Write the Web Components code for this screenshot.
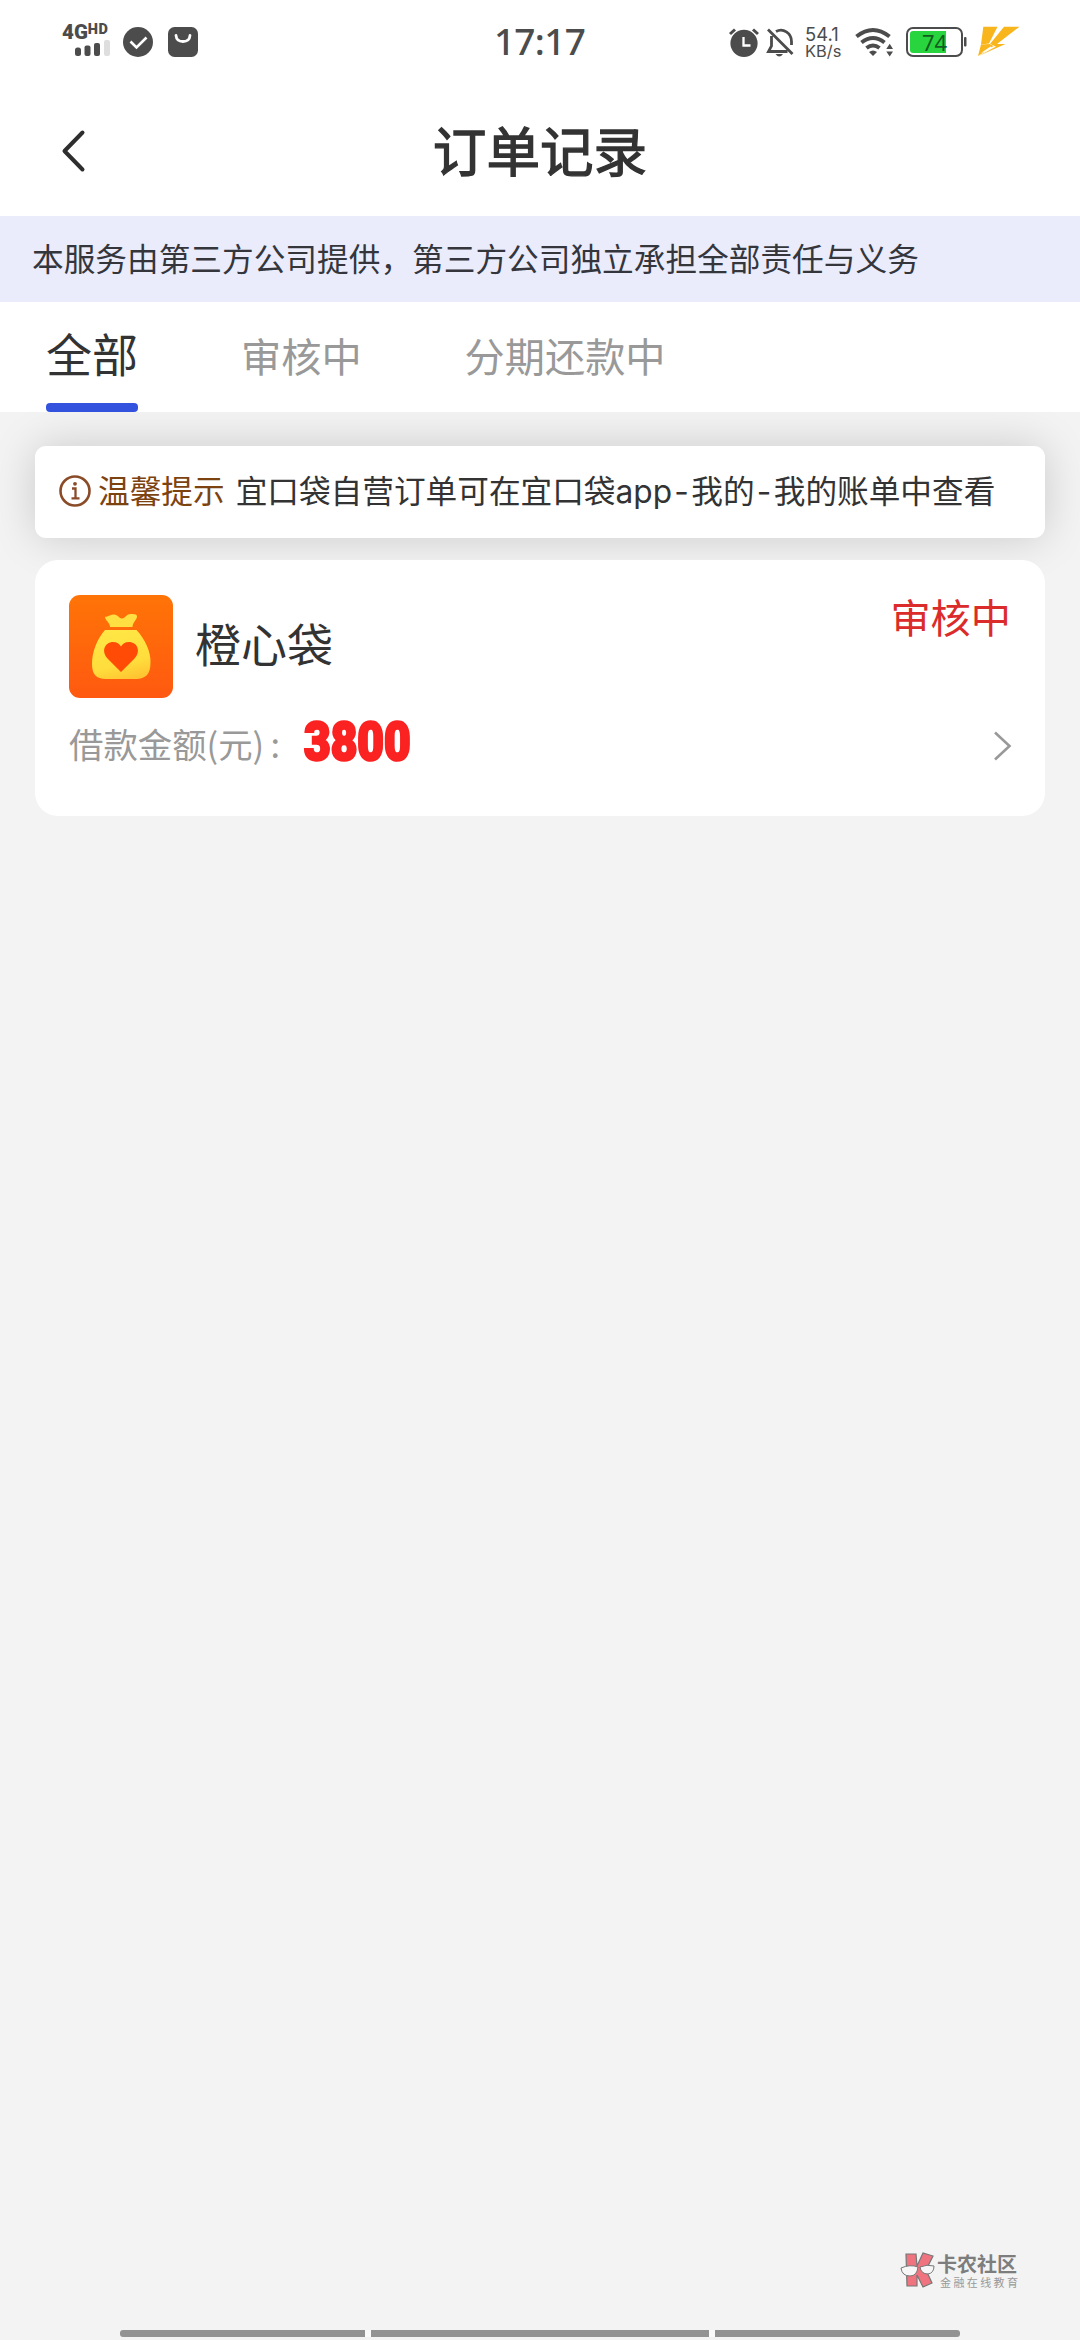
<!DOCTYPE html>
<html lang="zh-CN">
<head>
<meta charset="utf-8">
<title>订单记录</title>
<style>
html,body{margin:0;padding:0}
body{width:1080px;height:2340px;overflow:hidden;background:#f3f3f3;font-family:"Noto Sans CJK SC",sans-serif;color:#333}
</style>
</head>
<body>
<order-page></order-page>
<script>
const define = (name, html) => customElements.define(name, class extends HTMLElement {
  constructor() {
    super();
    const t = document.createElement('template');
    t.innerHTML = html;
    this.attachShadow({ mode: 'open' }).append(t.content.cloneNode(true));
  }
});

define('status-bar', `
<style>
:host{display:flex;height:84px;box-sizing:border-box;background:#fff;color:#4c4c4c;align-items:flex-start;justify-content:space-between;padding:0 60px 0 62px}
svg{display:block;flex:none}
.l,.r{display:flex;align-items:flex-start;width:420px}
.net{display:flex;flex-direction:column;width:50px;padding-top:22px}
.g{display:flex;align-items:flex-start;font:900 20.5px/20px Roboto,sans-serif;height:18px}
.g small{font:900 14.5px/15px Roboto,sans-serif;letter-spacing:.4px}
.time{font:500 37px/40px "Noto Sans",sans-serif;padding-top:21px;letter-spacing:-.7px;margin-left:-3px}
.r{justify-content:flex-end}
.speed{display:flex;flex-direction:column;font:400 18.4px/17px Inter,sans-serif;width:38px;margin:26px 0 0 10px;white-space:nowrap}
.speed span+span{font-size:16.4px;line-height:17px}
.bat{display:flex;box-sizing:border-box;width:57px;height:30px;border:2px solid #4c4c4c;border-radius:7px;padding:2px;margin:27px 0 0 13px}
.fill{width:36px;height:22px;border-radius:3px 0 0 3px;background:#28d53e;color:#145d20;font:400 22px/22px "Noto Sans",sans-serif;text-indent:12px;white-space:nowrap}
</style>
<div class="l">
 <div class="net"><div class="g">4G<small>HD</small></div>
  <svg width="50" height="18" viewBox="62 40 50 18"><g fill="#4c4c4c"><rect x="75" y="47.5" width="6" height="8.5" rx="2.5"/><rect x="84.5" y="45.5" width="6" height="10.5" rx="2"/><rect x="94" y="43" width="6" height="13" rx="2"/></g><rect x="104" y="40" width="6" height="16" rx="2" fill="#dedede"/></svg>
 </div>
 <svg width="90" height="60" viewBox="112 0 90 60"><circle cx="138" cy="42" r="15" fill="#4c4c4c"/><path d="M130.500 41.500l6 6 10-10" fill="none" stroke="#fff" stroke-width="2.600"/><rect x="168" y="27" width="30" height="30" rx="6.500" fill="#4c4c4c"/><path d="M176 35.500q.5 6 7 6t7-6" fill="none" stroke="#fff" stroke-width="2.800" stroke-linecap="round"/></svg>
</div>
<div class="time">17:17</div>
<div class="r">
 <svg width="68" height="60" viewBox="729 0 68 60"><circle cx="746" cy="43.3" r="13.6" fill="#4c4c4c"/><path d="M732 34l5-4.500M760 34l-5-4.500" stroke="#4c4c4c" stroke-width="3"/><path d="M745.500 37v8.500h7" fill="none" stroke="#fff" stroke-width="2.300"/><path d="M770 29.500L794.500 54M773.500 36v10l-3 5.500h19M778 31.500c7-4 15.500 1.500 15.500 10v3.500" fill="none" stroke="#4c4c4c" stroke-width="2.800"/><path d="M777.500 54h7.500q-3.700 5-7.500 0z" fill="#4c4c4c"/></svg>
 <div class="speed"><span>54.1</span><span>KB/s</span></div>
 <svg style="margin-left:12px" width="38" height="60" viewBox="856 0 38 60"><g fill="none" stroke="#4c4c4c" stroke-width="4"><path d="M857.500 36.500q16.500-13 33 0"/><path d="M862.500 42.500q11.500-9 23 0"/><path d="M867.500 48q6.500-5 13 0"/></g><path d="M870 52q4-3 8 0l-4 4z" fill="#4c4c4c"/><path d="M887.300 49l3.400-5.200 3.300 5.200zM887.300 51.500l3.400 5 3.300-5z" fill="#4c4c4c"/></svg>
 <div class="bat"><div class="fill">74</div></div>
 <svg width="57" height="60" viewBox="963 0 57 60"><rect x="964" y="37" width="2.500" height="9.500" rx="1" fill="#4c4c4c"/><g fill="#f9b51c"><path d="M983.300 26.700h14.200L989 43.500l-8 1z"/><path d="M1004 26.700h15.500L997 44h8.500L978.500 56 996 46.500l-6-2.500z"/><path d="M981 44.500l8.500-.5 4 2L978 56z"/></g><path d="M990.500 46.500L981 53l5-1.500 6-4z" fill="#fff"/></svg>
</div>`);

define('nav-header', `
<style>
:host{display:grid;grid-template-columns:120px 1fr 120px;height:132px;background:#fff}
svg{display:block}
h1{margin:0;font:400 53.6px/130px "Noto Sans CJK SC",sans-serif;text-align:center;-webkit-text-stroke:1.3px #333}
</style>
<svg width="120" height="132" viewBox="0 84 120 132"><path d="M82.500 132.500L64.500 151l18 18.500" fill="none" stroke="#2e2e2e" stroke-width="4" stroke-linecap="round" stroke-linejoin="round"/></svg>
<h1><slot></slot></h1>`);

define('service-notice', `
<style>:host{display:block;height:86px;background:#eaecfc;padding-left:32px;font-size:31.68px;line-height:82px;color:#35363c;white-space:nowrap}</style><slot></slot>`);

define('tab-item', `
<style>
:host{display:flex;flex-direction:column;height:110px;color:#999;font-size:40.2px;white-space:nowrap}
.t{height:101px;line-height:105px}
i{display:block;height:9px;border-radius:4px}
:host([active]){color:#333;font-size:46px}
:host([active]) .t{line-height:101px}
:host([active]) i{background:#3353df}
</style><div class="t"><slot></slot></div><i></i>`);

define('tab-bar', `
<style>:host{display:flex;height:110px;background:#fff;padding-left:46px;gap:103px;position:relative;z-index:2}</style><slot></slot>`);

define('tip-card', `
<style>
:host{display:flex;align-items:flex-start;box-sizing:border-box;height:92px;border-radius:11px;background:#fff;box-shadow:0 0 44px rgba(0,0,0,.17);padding-left:23px;font:31.66px/92px Inter,"Noto Sans CJK SC",sans-serif;white-space:nowrap}
svg{display:block;margin-top:28px;flex:none}
b{font-weight:400;color:#7c4310;margin:0 11px 0 6px}
::slotted(i){font-style:normal}
</style>
<svg width="34" height="34" viewBox="0 0 34 34" fill="none" stroke="#8a4c28"><circle cx="17" cy="17" r="14.500" stroke-width="2.600"/><path d="M14 14.500h3.500V24M13.500 24.300h8" stroke-width="2.300"/><circle cx="17" cy="9.800" r="1.900" fill="#8a4c28" stroke="none"/></svg>
<b><slot name="label"></slot></b><span><slot></slot></span>`);

define('bag-icon', `
<style>:host{display:block;width:104px;height:103px}svg{display:block}</style>
<svg width="104" height="103" viewBox="0 0 104 103"><defs><linearGradient id="o" x1="0" y1="0" x2="0" y2="1"><stop stop-color="#ff7407"/><stop offset="1" stop-color="#ff5910"/></linearGradient><linearGradient id="y" x1=".3" y1="0" x2=".6" y2="1"><stop stop-color="#ffe746"/><stop offset=".7" stop-color="#ffdd3c"/><stop offset="1" stop-color="#ffc632"/></linearGradient></defs>
<rect width="104" height="103" rx="11" fill="url(#o)"/>
<path d="M36 21.500c3 1 5-2 9-2 4 0 5 4 8 4 3.500 0 4-4.500 8.500-4.500 3 0 6.500 0 6.500 2.500 0 3-4.500 6-4.500 10.500H41c0-5-5-6-5-10.500z" fill="#ffdf42"/>
<path d="M36 35h31.500C76 44 82 57 81.500 68c0 11-5 16-14.500 16H37c-10 0-14-5-14-15 0-12 5-25 13-34z" fill="url(#y)"/>
<path d="M52 77L38.500 63.500c-7-8-2-16.500 5.500-16.500 4 0 6.500 2 8 4.500 1.500-2.500 4-4.500 8-4.500 8 0 12.500 9 5.500 16.500z" fill="#ff4b06"/></svg>`);

define('order-card', `
<style>
:host{display:flex;flex-direction:column;box-sizing:border-box;height:256px;border-radius:23px;background:#fff;padding:35px 34px 0;position:relative;z-index:1}
.top{display:flex;align-items:flex-start;height:103px}
.name{font-size:46px;line-height:95px;margin-left:22px;flex:1}
.state{font-size:40.2px;line-height:42px;color:#db2b2b}
.row{display:flex;height:90px;align-items:flex-start;white-space:nowrap}
.label{font-size:34.4px;line-height:91px;color:#999;width:235px;word-spacing:-1.500px}
.amt{font:900 53.5px/87px Roboto,sans-serif;color:#fb2222;transform:scaleX(.86);transform-origin:0 0;-webkit-text-stroke:2.600px #fb2222;paint-order:stroke fill;stroke-linejoin:round}
svg{display:block;margin:30px -1px 0 auto}
</style>
<div class="top"><bag-icon></bag-icon><div class="name"><slot name="name"></slot></div><div class="state"><slot name="state"></slot></div></div>
<div class="row"><div class="label"><slot name="label"></slot></div><div class="amt"><slot name="amount"></slot></div>
<svg width="20" height="36" viewBox="0 0 20 36"><path d="M3 4.500L17.500 18 3 31.500" fill="none" stroke="#999" stroke-width="2.600"/></svg></div>`);

define('water-mark', `
<style>
:host{display:flex;align-items:flex-start;white-space:nowrap;color:#7d7d7d}
svg{display:block;flex:none}
.w{display:flex;flex-direction:column;margin-left:1px}
.a{font-weight:700;font-size:20px;line-height:24px}
.c{font-size:11px;line-height:12px;letter-spacing:2.400px;color:#999;padding-left:3px}
</style>
<svg width="36" height="38" viewBox="0 0 36 38"><g fill="#f0747f" stroke="#777" stroke-width="1.200"><path d="M6 2h10l1 12 6-13 10 3-7 14 6 13-9 4-6-12v11H7z"/></g><g fill="#f7f7f7" stroke="#777" stroke-width="1"><path d="M1 16q9-4 17-1-1 9-8 9-8 0-9-8z"/><path d="M20 15q7-3 14-1 0 7-6 8-7 0-8-7z"/></g></svg>
<div class="w"><div class="a"><slot name="title"></slot></div><div class="c"><slot name="sub"></slot></div></div>`);

define('gesture-bar', `
<style>:host{display:flex;width:840px;height:7px;gap:6px;background:#fafafa;border-radius:3px}i{background:#929292;flex:245 0 0}i:nth-of-type(2){flex-grow:338}i:first-of-type{border-radius:3px 0 0 3px}i:last-of-type{border-radius:0 3px 3px 0}</style><i></i><i></i><i></i>`);

define('order-page', `
<style>
:host{display:flex;flex-direction:column;width:1080px;height:2340px;background:#f3f3f3;overflow:hidden}
main{display:flex;flex-direction:column;gap:22px;padding:34px 35px 0;flex:1}
footer{display:flex;flex-direction:column;height:88px}
water-mark{margin-left:900px;height:78px}
gesture-bar{margin-left:120px}
.dash{letter-spacing:2.300px;margin-left:2.300px}
</style>
<status-bar></status-bar>
<nav-header>订单记录</nav-header>
<service-notice>本服务由第三方公司提供，第三方公司独立承担全部责任与义务</service-notice>
<tab-bar><tab-item active>全部</tab-item><tab-item>审核中</tab-item><tab-item>分期还款中</tab-item></tab-bar>
<main>
<tip-card><span slot="label">温馨提示</span>宜口袋自营订单可在宜口袋app<span class="dash">-</span>我的<span class="dash">-</span>我的账单中查看</tip-card>
<order-card><span slot="name">橙心袋</span><span slot="state">审核中</span><span slot="label">借款金额(元) :</span><span slot="amount">3800</span></order-card>
</main>
<footer><water-mark><span slot="title">卡农社区</span><span slot="sub">金融在线教育</span></water-mark><gesture-bar></gesture-bar></footer>`);
</script>
</body>
</html>
